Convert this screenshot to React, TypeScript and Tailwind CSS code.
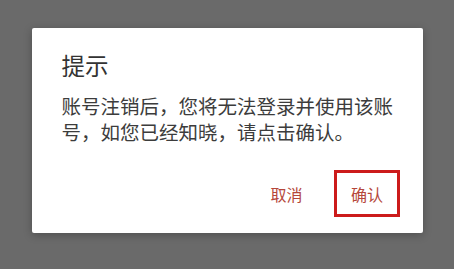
export default function App() {
  const font = { fontFamily: '"Noto Sans CJK SC", "Noto Sans", sans-serif' };

  return (
    <div className="flex h-[269px] w-full justify-center bg-[#6a6a6a] pt-[28px]" style={font}>
      <div className="flex h-[205px] w-[391px] flex-col rounded-[2px] bg-white shadow-[0_2px_8px_rgba(0,0,0,0.25)]">
        <div className="pl-[30px] pr-[26px] pt-[22px]">
          <h2 className="text-[23.5px] leading-[30px] text-[#333333]">提示</h2>
          <p className="mt-[13px] text-[19.5px] leading-[26px] text-[#3c3c3c]">
            账号注销后，您将无法登录并使用该账号，如您已经知晓，请点击确认。
          </p>
        </div>
        <div className="mt-auto flex justify-end gap-[16px] pb-[16px] pr-[23px]">
          <button className="h-[47px] px-[16px] text-[16px] text-[#b5473a]">取消</button>
          <button className="h-[47px] border-[3px] border-[#cc1b1b] px-[13.5px] text-[16px] text-[#b5473a]">
            确认
          </button>
        </div>
      </div>
    </div>
  );
}
